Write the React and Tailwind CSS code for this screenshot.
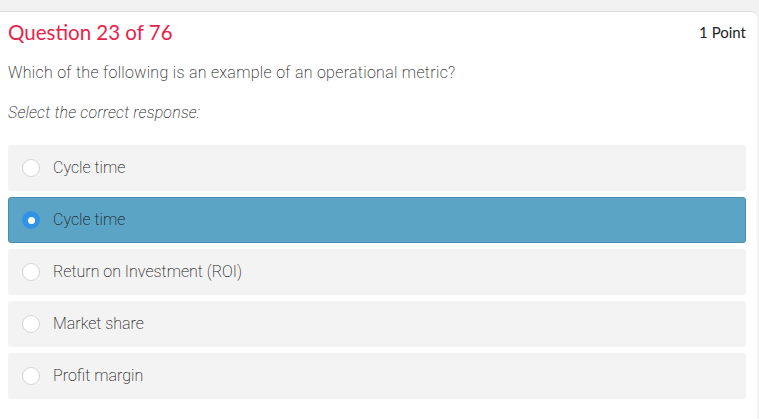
import React from "react";

const options = [
  { label: "Cycle time", selected: false },
  { label: "Cycle time", selected: true },
  { label: "Return on Investment (ROI)", selected: false },
  { label: "Market share", selected: false },
  { label: "Profit margin", selected: false },
];

function Radio({ selected }) {
  if (selected) {
    return (
      <span className="flex h-[18px] w-[18px] items-center justify-center rounded-full bg-[#2f93e6]">
        <span className="h-[7px] w-[7px] rounded-full bg-white" />
      </span>
    );
  }
  return <span className="h-[18px] w-[18px] rounded-full border border-[#d4d4d4] bg-white" />;
}

export default function App() {
  return (
    <div className="h-[419px] w-[759px] overflow-hidden bg-[#f2f2f2] pt-[11px]" style={{ fontFamily: "Roboto, 'Liberation Sans', sans-serif" }}>
      <div className="h-full w-[757px] rounded-tr-[6px] border-t border-[#dedede] bg-white px-2">
        <div className="flex items-center justify-between pt-[8px]">
          <h1 className="text-[20.5px] leading-[24px] text-[#e8234a]" style={{ fontFamily: "Lato, 'Open Sans', sans-serif" }}>
            Question 23 of 76
          </h1>
          <span className="pr-[3px] text-[15px] leading-[24px] text-[#222]" style={{ fontFamily: "Lato, 'Open Sans', sans-serif" }}>
            1 Point
          </span>
        </div>
        <p className="mt-[19px] text-[16px] font-[200] leading-[19px] tracking-[0.3px] text-[#1a1a1a]">
          Which of the following is an example of an operational metric?
        </p>
        <p className="mt-[21px] text-[16px] font-[200] italic leading-[19px] tracking-[0.2px] text-[#1a1a1a]">
          Select the correct response:
        </p>
        <div className="mt-[23px] flex w-[738px] flex-col gap-[6px]">
          {options.map((o, i) => (
            <div
              key={i}
              className={
                o.selected
                  ? "flex h-[46px] items-center gap-[13px] rounded-[3px] border border-[#4a8db0] bg-[#5ba4c5] pl-[13px]"
                  : "flex h-[46px] items-center gap-[13px] rounded-[3px] bg-[#f3f3f3] pl-[14px]"
              }
            >
              <Radio selected={o.selected} />
              <span className="text-[16px] font-[200] text-[#1a1a1a]">{o.label}</span>
            </div>
          ))}
        </div>
      </div>
    </div>
  );
}
